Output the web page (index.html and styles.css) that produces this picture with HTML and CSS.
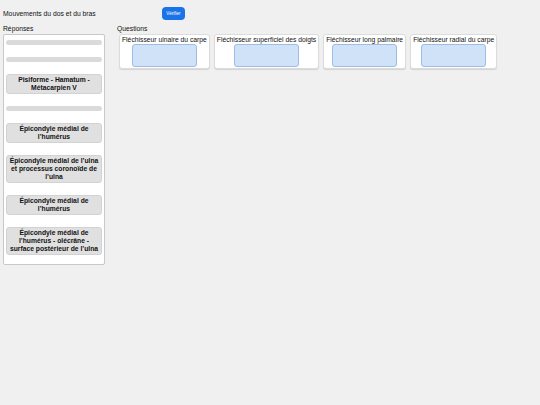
FILE: index.html
```html
<!DOCTYPE html>
<html lang="fr">
<head>
<meta charset="utf-8">
<title>Mouvements du dos et du bras</title>
<link rel="stylesheet" href="styles.css">
</head>
<body>
<div class="header">
  <div class="title">Mouvements du dos et du bras</div>
  <button class="verify">Vérifier</button>
</div>
<div class="main">
  <div class="answers">
    <div class="label">Réponses</div>
    <div class="panel">
      <div class="slot"></div>
      <div class="slot"></div>
      <div class="chip">Pisiforme - Hamatum - Métacarpien V</div>
      <div class="slot"></div>
      <div class="chip">Épicondyle médial de l’humérus</div>
      <div class="chip">Épicondyle médial de l’ulna et processus coronoïde de l’ulna</div>
      <div class="chip">Épicondyle médial de l’humérus</div>
      <div class="chip">Épicondyle médial de l’humérus - olécrâne - surface postérieur de l’ulna</div>
    </div>
  </div>
  <div class="questions">
    <div class="label">Questions</div>
    <div class="qrow">
      <div class="qcard"><div class="qname">Fléchisseur ulnaire du carpe</div><div class="drop"></div></div>
      <div class="qcard"><div class="qname">Fléchisseur superficiel des doigts</div><div class="drop"></div></div>
      <div class="qcard"><div class="qname">Fléchisseur long palmaire</div><div class="drop"></div></div>
      <div class="qcard"><div class="qname">Fléchisseur radial du carpe</div><div class="drop"></div></div>
    </div>
  </div>
</div>
</body>
</html>
```
FILE: styles.css
```css
html, body {
  margin: 0;
  padding: 0;
  background: #f0f0f0;
  font-family: "Liberation Sans", Arial, sans-serif;
  font-size: 6.75px;
  color: #111;
}
.header {
  display: flex;
  align-items: center;
  height: 20px;
  padding: 7px 0 0 3px;
  box-sizing: border-box;
}
.title {
  width: 159px;
  line-height: 8px;
}
.verify {
  width: 23px;
  height: 13px;
  padding: 0;
  border: none;
  border-radius: 4px;
  background: #1a73e8;
  color: #fff;
  font-family: "Liberation Sans", Arial, sans-serif;
  font-size: 4.5px;
  line-height: 13px;
}
.main {
  display: flex;
  padding: 5px 0 0 3px;
  gap: 12px;
}
.label {
  line-height: 8px;
  height: 8px;
  margin-bottom: 1px;
}
.answers {
  width: 102px;
}
.panel {
  background: #fff;
  border: 1px solid #c8c8c8;
  border-radius: 2px;
  padding: 5px 2px 9px 2px;
  display: flex;
  flex-direction: column;
  gap: 12px;
}
.slot {
  height: 5px;
  border-radius: 3px;
  background: #dadada;
}
.chip {
  background: #e0e0e0;
  border: 1px solid #d2d2d2;
  border-radius: 3px;
  padding: 1px 1px;
  font-weight: bold;
  text-align: center;
  line-height: 8px;
}
.questions {
  flex: 1;
}
.qrow {
  display: flex;
  align-items: flex-start;
  gap: 4px;
  padding-left: 2px;
  margin-top: 1px;
}
.qcard {
  background: #fff;
  border: 1px solid #dcdcdc;
  border-radius: 3px;
  box-shadow: 0 1px 1px rgba(0,0,0,0.12);
  padding: 1px 2px;
  display: flex;
  flex-direction: column;
  align-items: center;
}
.qname {
  line-height: 8px;
  white-space: nowrap;
}
.drop {
  width: 63px;
  height: 21px;
  background: #cfe2f7;
  border: 1px solid #9dbde2;
  border-radius: 3px;
}
```
